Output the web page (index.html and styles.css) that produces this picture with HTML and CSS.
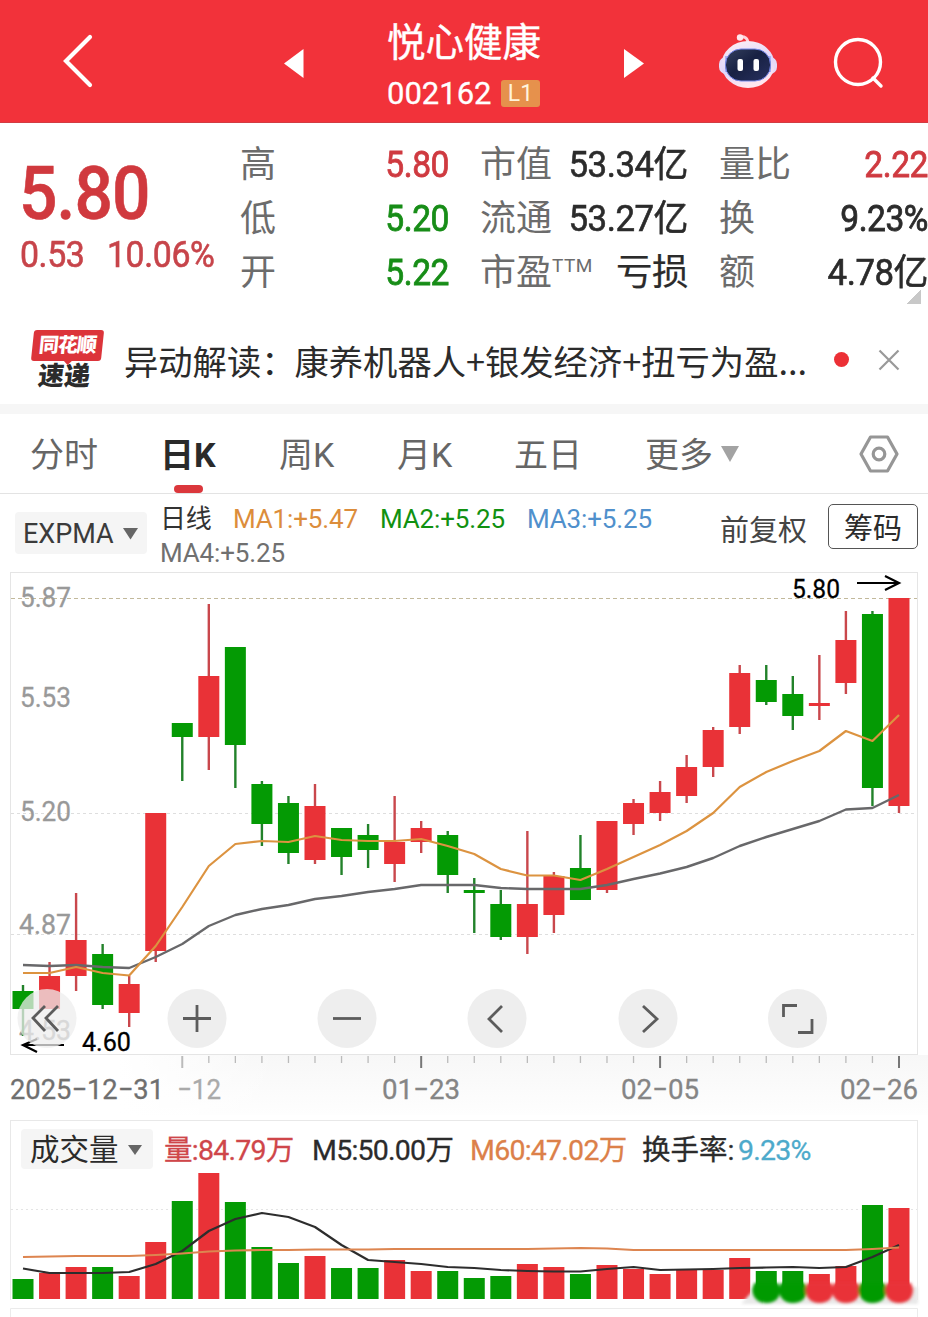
FILE: index.html
```html
<!DOCTYPE html>
<html lang="zh-CN">
<head>
<meta charset="utf-8">
<title>悦心健康 002162</title>
<link rel="stylesheet" href="styles.css">
</head>
<body>
<header class="topbar">
  <svg class="back" width="32" height="54" viewBox="0 0 32 54"><path d="M29 3 5 27 29 51" fill="none" stroke="#fff" stroke-width="4.2" stroke-linecap="round"/></svg>
  <svg class="prev" width="20" height="29" viewBox="0 0 20 29"><path d="M0 14.5 19.500 0V29Z" fill="#fff"/></svg>
  <div class="stock">
    <div class="stock-name">悦心健康</div>
    <div class="stock-code"><span>002162</span><span class="level">L1</span></div>
  </div>
  <svg class="next" width="20" height="29" viewBox="0 0 20 29"><path d="M20 14.500 0 0V29Z" fill="#fff"/></svg>
  <svg class="robot" width="60" height="56" viewBox="0 0 60 56">
    <defs>
      <linearGradient id="shell" x1="0" y1="0" x2="0.3" y2="1"><stop offset="0" stop-color="#fff0f4"/><stop offset=".6" stop-color="#dfd5fa"/><stop offset="1" stop-color="#ffe6f0"/></linearGradient>
      <linearGradient id="visor" x1="0" y1="0" x2="1" y2="1"><stop offset="0" stop-color="#34405e"/><stop offset=".45" stop-color="#182143"/><stop offset="1" stop-color="#27305f"/></linearGradient>
    </defs>
    <path d="M21 4C27 3 30 5 30 11" fill="none" stroke="#ffd3dc" stroke-width="3"/>
    <circle cx="22" cy="4.500" r="3.200" fill="#ffe8ee"/>
    <rect x="1" y="24" width="58" height="17" rx="7" fill="#e5d9f8"/>
    <ellipse cx="30" cy="31.500" rx="26.500" ry="23.500" fill="url(#shell)"/>
    <path d="M8 23V39M52 23V39" stroke="#a9b2f4" stroke-width="2"/>
    <rect x="7.500" y="16" width="45" height="32" rx="15.500" fill="url(#visor)" stroke="#7587e9" stroke-width="1"/>
    <rect x="19.500" y="26" width="5.500" height="12" rx="2" fill="#fff"/><rect x="35.500" y="26" width="5.500" height="12" rx="2" fill="#fff"/>
  </svg>
  <svg class="search" width="52" height="52" viewBox="0 0 52 52"><g fill="none" stroke="#fff" stroke-width="3.400" stroke-linecap="round"><circle cx="25" cy="25" r="22.500"/><path d="M40 41 48 49"/></g></svg>
</header>

<section class="quote">
  <div class="price">
    <div class="last">5.80</div>
    <div class="change"><span>0.53</span><span class="pct">10.06%</span></div>
  </div>
  <dl class="stats s1">
    <dt>高</dt><dd class="up">5.80</dd>
    <dt>低</dt><dd class="down">5.20</dd>
    <dt>开</dt><dd class="down">5.22</dd>
  </dl>
  <dl class="stats s2">
    <dt>市值</dt><dd class="wide">53.34亿</dd>
    <dt>流通</dt><dd class="wide">53.27亿</dd>
    <dt>市盈<span class="ttm">TTM</span></dt><dd class="word">亏损</dd>
  </dl>
  <dl class="stats s3">
    <dt>量比</dt><dd class="up">2.22</dd>
    <dt>换</dt><dd>9.23%</dd>
    <dt>额</dt><dd class="wide">4.78亿</dd>
  </dl>
  <i class="corner"></i>
</section>

<section class="notice">
  <div class="brand"><div class="brand-top">同花顺</div><div class="brand-bottom">速递</div></div>
  <div class="notice-text"><span>异动解读：</span><span class="notice-body">康养机器人+银发经济+扭亏为盈...</span></div>
  <i class="dot"></i>
  <svg class="close" width="22" height="22" viewBox="0 0 22 22"><path d="M1.500 1.500 20.500 20.500M20.500 1.500 1.500 20.500" stroke="#999" stroke-width="2.200"/></svg>
</section>

<nav class="tabs">
  <span class="t1">分时</span><span class="t2 active">日K</span><span class="t3">周K</span><span class="t4">月K</span><span class="t5">五日</span><span class="t6">更多</span>
  <svg class="more" width="18" height="16" viewBox="0 0 18 16"><path d="M0 0H18L9 16Z" fill="#a3a3a3"/></svg>
  <svg class="gear" width="40" height="38" viewBox="0 0 40 38"><g fill="none" stroke="#969696" stroke-width="3.200" stroke-linejoin="round"><path d="M11.500 2H28.500L38 19 28.500 36H11.500L2 19Z"/><circle cx="20" cy="19" r="5.800"/></g></svg>
</nav>

<section class="indicator">
  <div class="pick expma"><span>EXPMA</span><svg width="15" height="12" viewBox="0 0 15 12"><path d="M0 0H15L7.500 11.500Z" fill="#666"/></svg></div>
  <div class="averages">
    <span class="kind">日线</span><span class="ma1">MA1:+5.47</span><span class="ma2">MA2:+5.25</span><span class="ma3">MA3:+5.25</span><span class="ma4">MA4:+5.25</span>
  </div>
  <span class="adjust">前复权</span>
  <span class="chips">筹码</span>
</section>

<section class="kline">
  <svg id="kline" width="928" height="548" viewBox="0 572 928 548"></svg>
</section>

<section class="volume">
  <div class="volume-head">
    <div class="pick vol"><span>成交量</span><svg width="14" height="10" viewBox="0 0 14 10"><path d="M0 0H14L7 10Z" fill="#666"/></svg></div>
    <span class="v1">量:84.79万</span><span class="v2">M5:50.00万</span><span class="v3">M60:47.02万</span><span class="v4">换手率:</span><span class="v5">9.23%</span>
  </div>
  <svg id="bars" width="928" height="147" viewBox="0 1170 928 147"></svg>
</section>
<script src="chart.js"></script>
</body>
</html>
```
FILE: styles.css
```css
* { box-sizing: border-box; }
body { margin: 0; width: 928px; height: 1317px; overflow: hidden; background: #fff; color: #2b2b2b; font-family: Roboto, "Noto Sans CJK SC", sans-serif; white-space: nowrap; }
svg { display: block; flex: none; }
dl, dt, dd { margin: 0; }

.topbar { height: 123px; background: #f2323a; border-bottom: 1px solid #d23c43; display: flex; align-items: center; color: #fff; }
.back { margin: 0 0 0 61px; }
.prev { margin-left: 191px; margin-top: 4px; }
.stock { width: 156px; margin-left: 83px; height: 123px; padding-top: 17px; }
.stock-name { font-size: 38.5px; line-height: 52px; height: 60px; -webkit-text-stroke: .4px #fff; }
.stock-code { display: flex; align-items: center; font-size: 31px; line-height: 34px; }
.stock-code span:first-child { width: 114px; -webkit-text-stroke: .3px #fff; }
.level { width: 39px; height: 27px; line-height: 27px; border-radius: 3px; background: #e6914c; font-size: 23px; text-align: center; color: #fff3dc; }
.next { margin-left: 81px; margin-top: 4px; }
.robot { margin-left: 74px; }
.search { margin-left: 55px; margin-top: 4px; }

.quote { height: 187px; display: flex; position: relative; }
.price { width: 240px; padding: 31px 0 0 19px; color: #d0393e; }
.last { font-size: 74px; font-weight: 500; line-height: 80px; letter-spacing: -1px; transform: scaleX(.915); transform-origin: left; -webkit-text-stroke: .6px; }
.change { display: flex; font-size: 36px; line-height: 43px; letter-spacing: -.4px; -webkit-text-stroke: .6px #c7444a; color: #c7444a; transform: scaleX(.94); transform-origin: left; padding-left: 1px; }
.pct { margin-left: 24px; }
.stats { display: grid; grid-template-columns: 72px 1fr; grid-auto-rows: 54px; line-height: 54px; font-size: 36px; padding-top: 15px; }
.stats dt { color: #6c6c6c; }
.stats dd { text-align: right; font-size: 36.5px; line-height: 53px; letter-spacing: -.5px; font-weight: 400; -webkit-text-stroke: .8px currentColor; transform: scaleX(.92); transform-origin: right; }
.stats .wide { transform: scaleX(.955); -webkit-text-stroke-width: .6px; }
.stats .word { transform: none; -webkit-text-stroke-width: .2px; }
.s1 { width: 209px; }
.s2 { width: 208px; margin-left: 31px; }
.s3 { width: 209px; margin-left: 31px; }
.stats .up { color: #cf3a40; }
.stats .down { color: #178d17; }
.ttm { font-size: 19px; line-height: 0; vertical-align: 13px; letter-spacing: .4px; }
.corner { position: absolute; right: 7px; bottom: 6px; width: 15px; height: 14px; background: linear-gradient(135deg, transparent 50%, #c8c8c8 50%); }

.notice { height: 94px; display: flex; align-items: center; padding: 5px 0 0 30px; }
.brand { width: 70px; height: 60px; margin: 0 23px 0 1px; text-align: center; transform: skewX(-6deg); font-weight: 900; }
.brand-top { height: 31px; background: #dc343a; border-radius: 3px; color: #fff; font-size: 20px; line-height: 30px; letter-spacing: -1px; position: relative; }
.brand-top::after { content: ""; position: absolute; left: 32px; top: 30px; border: 5px solid transparent; border-top-color: #dc343a; }
.brand-bottom { font-size: 26px; line-height: 31px; }
.notice-text { width: 709px; font-family: "Noto Sans CJK SC", sans-serif; font-size: 34.3px; line-height: 50px; display: flex; }
.notice-body { margin-left: -1px; }
.dot { width: 15px; height: 15px; border-radius: 50%; background: #ec3036; margin: 0 29px 0 1px; }

.tabs { height: 90px; border-top: 10px solid #f6f6f6; border-bottom: 1px solid #e3e3e3; display: flex; align-items: center; font-size: 34px; color: #666; line-height: 50px; }
.tabs span { padding-top: 2px; }
.t1 { width: 130px; margin-left: 30px; }
.t2 { width: 119px; }
.t3 { width: 118px; }
.t4 { width: 117px; }
.t5 { width: 131px; }
.t6 { width: 76px; }
.active { color: #2a2a2a; font-weight: 700; position: relative; }
.active::after { content: ""; position: absolute; left: 14px; top: 57px; width: 29px; height: 8px; border-radius: 4px; background: #db373c; }
.gear { margin-left: 120px; }

.indicator { height: 78px; display: flex; padding-left: 15px; }
.pick { display: flex; align-items: center; background: #f5f5f5; border-radius: 4px; }
.expma { width: 132px; height: 42px; margin: 18px 13px 0 0; padding: 2px 9px 0 8px; font-size: 27px; justify-content: space-between; color: #3b3b3b; }
.averages { width: 560px; padding-top: 8px; display: grid; grid-template-columns: 73px 147px 147px 1fr; grid-auto-rows: 34px; line-height: 34px; font-size: 26px; letter-spacing: -.15px; }
.kind { color: #333; }
.ma1 { color: #dc8d3b; }
.ma2 { color: #119111; }
.ma3 { color: #5090cc; }
.ma4 { color: #707070; grid-column: 1 / 3; }
.adjust { font-size: 29px; line-height: 74px; width: 108px; color: #444; }
.chips { width: 90px; height: 45px; margin-top: 10px; border: 1.5px solid #555; border-radius: 5px; font-size: 29px; line-height: 48px; text-align: center; }

.kline { height: 548px; }
.volume { height: 197px; }
.volume-head { height: 50px; margin: 0 10px; border: solid #e8e8e8; border-width: 1px 1px 0; display: flex; padding: 8px 0 0 10px; font-size: 28.5px; line-height: 43px; letter-spacing: -.75px; }
.vol { width: 132px; height: 40px; margin-right: 11px; padding: 2px 11px 0 9px; justify-content: space-between; font-size: 29.5px; letter-spacing: 0; }
.v1 { width: 148px; color: #cf464a; -webkit-text-stroke: .3px; }
.v2 { width: 158px; -webkit-text-stroke: .3px; }
.v3 { width: 172px; color: #dc8049; -webkit-text-stroke: .3px; }
.v4 { width: 96px; letter-spacing: 0; -webkit-text-stroke: .3px; }
.v5 { color: #4daacb; -webkit-text-stroke: .3px; }
```
FILE: chart.js
```js
const UP = '#e93237', DOWN = '#049a04', STEP = 26.545, X0 = 23;
const cx = i => X0 + i * STEP;

// [direction, body top, body bottom, wick top, wick bottom]
const candles = [
  ['d',991,1009,985,1036],['u',976,1009,962,1009],['u',940,976,893,991],['d',954,1005,944,1009],['u',984,1013,976,1027],
  ['u',813,951,813,962],['d',723,737,723,781],['u',676,737,604,770],['d',647,745,647,788],['d',784,824,781,846],
  ['d',803,853,796,864],['u',806,860,784,864],['d',828,857,828,875],['d',835,850,824,868],['u',842,864,796,882],
  ['u',828,842,821,853],['d',835,875,831,893],['d',890,893,878,933],['d',904,937,890,940],['u',904,937,831,954],
  ['u',876,915,872,933],['d',868,900,835,900],['u',821,890,821,893],['u',803,824,799,835],['u',792,813,781,821],
  ['u',767,796,755,803],['u',730,767,727,777],['u',673,727,665,734],['d',680,702,665,705],['d',694,716,676,730],
  ['u',703,706,655,720],['u',640,683,611,694],['d',614,788,611,806],['u',598,806,598,813]
];
const fast = [973,973,967,973,975.5,946,907,866,844,841,842,836,840,841,841,839,846,854,869,875.5,875.5,880,869,857,845,831,813,787,772,761,751,731,741,715];
const slow = [965,966,965,967,968,957,944,926,915,909,905,899,896,892,889,885,885,885,888,889,889,889,885,879,873.5,867,858,846,837,829,821,809.5,808,795];
const volTop = [1279,1273,1267,1267,1276,1242,1201,1173,1202,1247,1263,1256,1268,1268,1260,1271,1271,1278,1276,1264,1267,1274,1265,1269,1274,1270,1270,1258,1271,1271,1274,1266,1205,1208];
const vol5 = [1268.500,1273,1273,1273,1272,1264,1251,1231,1219,1213,1217,1227,1245,1260,1262,1264,1267,1268,1270,1271,1271.500,1271.500,1269,1267,1270,1269.500,1269,1268,1267.500,1267,1268,1267,1257,1245];
const vol60 = [1257,1256.500,1256,1256,1256,1255,1253.500,1251.500,1250.500,1250,1250,1249.500,1249.500,1249.500,1249,1249,1249,1249,1249,1249,1248.500,1248,1248.500,1250,1250,1250,1250,1250,1250,1250,1250,1250,1249,1247.500];

const line = (ys, color, w) => `<polyline points="${ys.map((y, i) => cx(i) + ',' + y).join(' ')}" fill="none" stroke="${color}" stroke-width="${w}" stroke-linejoin="round"/>`;
const grid = (y, color, dash) => `<path d="M11 ${y}H917" stroke="${color}" stroke-dasharray="${dash}"/>`;
const label = (x, y, w, text, color, size) => `<text x="${x}" y="${y}" textLength="${w}" lengthAdjust="spacingAndGlyphs" font-size="${size}" fill="${color}" stroke="${color}" stroke-width=".3">${text}</text>`;

let k = `<defs><linearGradient id="fade" x1="0" y1="0" x2="0" y2="1"><stop offset="0" stop-color="#f7f7f7"/><stop offset="1" stop-color="#fefefe"/></linearGradient><linearGradient id="edge"><stop offset="0" stop-color="#fff"/><stop offset="1" stop-color="#fff" stop-opacity="0"/></linearGradient></defs>
<rect x="120" y="1055" width="808" height="60" fill="url(#fade)"/><rect x="119" y="1055" width="160" height="60" fill="url(#edge)"/>
<rect x="10.500" y="572.500" width="907" height="482" fill="#fff" stroke="#e5e5e5"/>`;
k += grid(598.5, '#c2b99b', '4 3') + grid(813.5, '#dedede', '3 3') + grid(934.5, '#dedede', '3 3');
k += label(20, 607, 51, '5.87', '#999', 28) + label(20, 707, 51, '5.53', '#999', 28) + label(20, 821, 51, '5.20', '#999', 28) + label(19, 934, 52, '4.87', '#999', 28) + label(19, 1040, 52, '4.53', '#999', 28);
candles.forEach(([d, t, b, wt, wb], i) => {
  const c = d === 'u' ? UP : DOWN, w = d === 'u' ? '#c9474c' : '#22822a';
  k += `<path d="M${cx(i)} ${wt}V${wb}" stroke="${w}" stroke-width="2.400"/><rect x="${cx(i) - 10.5}" y="${t}" width="21" height="${b - t}" fill="${c}"/>`;
});
k += line(slow, '#68686a', 2.4) + line(fast, '#dc9340', 2.2);
k += label(792, 598, 48, '5.80', '#000', 26) + `<path d="M857 583H897M885 576 899 583 885 590" fill="none" stroke="#000" stroke-width="2.200"/>`;
k += label(82, 1051, 49, '4.60', '#000', 26) + `<path d="M64 1045H25M37 1039 23 1045 37 1052" fill="none" stroke="#000" stroke-width="2.200"/>`;
const icons = {
  47: 'M45 1006 33 1018 45 1031M58 1006 46 1018 58 1031', 197: 'M183 1018.500H211M197 1005V1032', 347: 'M333 1018.500H361',
  497: 'M502 1006 489 1019 502 1032', 648: 'M643 1006 657 1019 643 1032', 797.5: 'M783.500 1017V1005.500H797M812 1019V1032.500H798'
};
for (const x in icons) k += `<circle cx="${x}" cy="1018.500" r="29.500" fill="#ededed" fill-opacity="${x == 47 ? .74 : .96}"/><path d="${icons[x]}" fill="none" stroke="#5c5c5c" stroke-width="2.800"/>`;
for (let i = 6; i < 34; i++) {
  const major = i % 9 === 6;
  k += `<path d="M${cx(i)} 1056V${major ? 1068 : 1063}" stroke="${major && i > 6 ? '#777' : '#bbb'}" stroke-width="${major ? 2 : 1.3}"/>`;
}
k += label(10, 1099, 154, '2025−12−31', '#6f6f6f', 28) + label(177, 1099, 44, '−12', '#aaa', 28) + label(382, 1099, 78, '01−23', '#858585', 28) + label(621, 1099, 78, '02−05', '#858585', 28) + label(840, 1099, 78, '02−26', '#858585', 28);
document.getElementById('kline').innerHTML = k;

let v = `<defs><filter id="soft" x="-20%" y="-50%" width="140%" height="200%"><feGaussianBlur stdDeviation="1.800"/></filter></defs>
<path d="M10.500 1170V1300M917.500 1170V1300M10.500 1317V1308.500H917.500V1317" fill="none" stroke="#ebebeb"/>` + grid(1209.5, '#e4e4e4', '2 3');
candles.forEach(([d], i) => {
  v += `<rect x="${cx(i) - 10.5}" y="${volTop[i]}" width="21" height="${(i > 27 ? 1289 : 1299) - volTop[i]}" fill="${d === 'u' ? UP : DOWN}"/>`;
});
v += '<path d="M742 1303 756 1287H918V1304H742Z" fill="#e9e9e9" filter="url(#soft)"/><g filter="url(#soft)">';
for (let i = 28; i < 34; i++) v += `<path d="M${cx(i) - 12} 1283H${cx(i) + 12}L${cx(i) + 14} 1289C${cx(i) + 14} 1298 ${cx(i) + 9} 1303 ${cx(i)} 1303C${cx(i) - 9} 1303 ${cx(i) - 14} 1297 ${cx(i) - 14} 1289Z" fill="${candles[i][0] === 'u' ? UP : DOWN}"/>`;
v += '</g>' + line(vol5, '#2d2d2d', 2.2) + line(vol60, '#dd8550', 2.2);
document.getElementById('bars').innerHTML = v;
```
